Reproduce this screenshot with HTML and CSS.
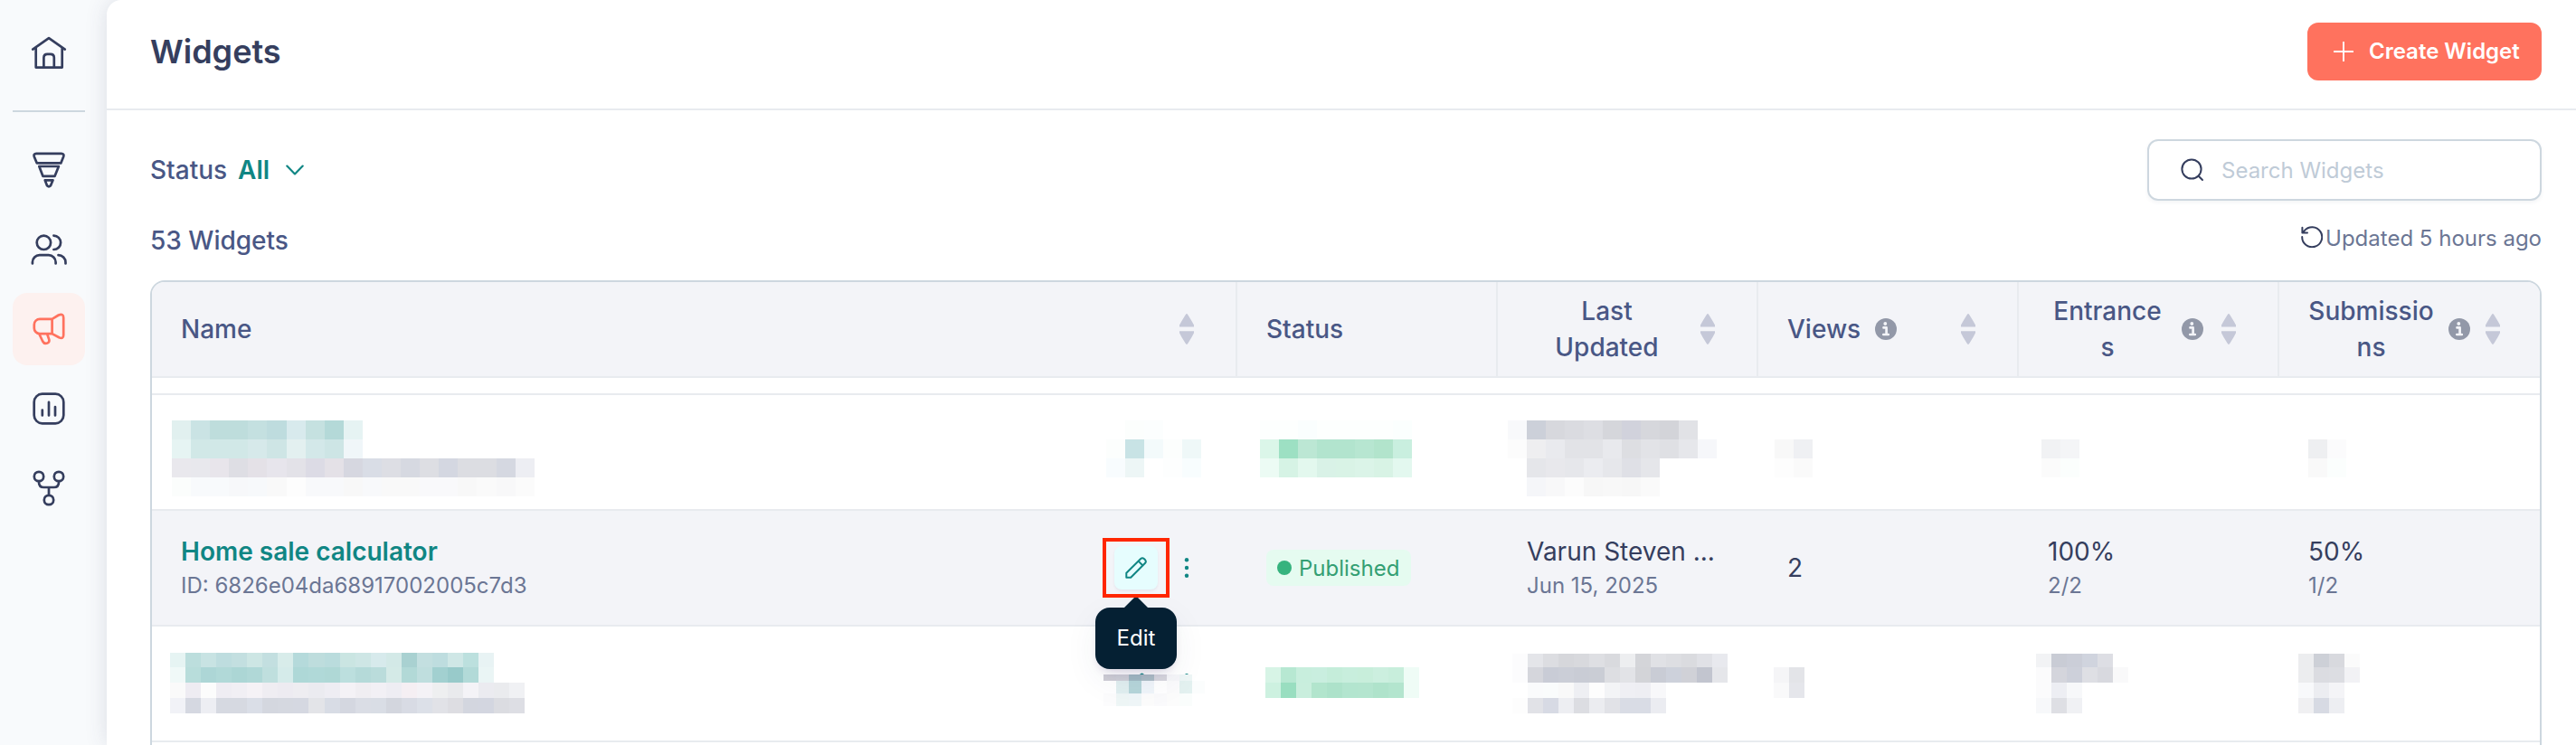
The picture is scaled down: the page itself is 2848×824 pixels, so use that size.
FILE: index.html
```html
<!DOCTYPE html>
<html lang="en">
<head>
<meta charset="utf-8">
<title>Widgets</title>
<link rel="stylesheet" href="styles.css">
</head>
<body>
<svg class="defs" width="0" height="0">
  <symbol id="sort" viewBox="0 0 16 34"><path d="M6.8.9Q8-.7 9.200.9L13.500 8 16 12.600V14.600H0V12.600L2.500 8ZM0 19.300H16V21.200L13.500 26 9.200 33Q8 34.700 6.800 33L2.500 26 0 21.200Z" fill="#c5c8d8"/></symbol>
  <symbol id="info" viewBox="0 0 24 24"><circle cx="12" cy="12" r="12" fill="#9298a8"/><circle cx="11.300" cy="6" r="1.900" fill="#f3f4f8"/><path d="M9.500 10.400H12.600V17.800M9.300 18H14.800" fill="none" stroke="#f3f4f8" stroke-width="2.700" stroke-linecap="round" stroke-linejoin="round"/></symbol>
</svg>
<div class="app">
  <nav class="sidebar">
    <a class="nav-item"><svg class="nav-icon" viewBox="0 0 48 48"><path d="M6.200 20.600 24 8.200 41.800 20.600M9.700 18.800V40.600H38.700V18.800M18.400 40V29.800Q18.400 25.800 22.400 25.800H25.800Q29.800 25.800 29.800 29.800V40"/></svg></a>
    <hr class="nav-rule">
    <a class="nav-item"><svg class="nav-icon" viewBox="0 0 48 48"><path d="M10.200 5.800H37.800Q41.300 6 40.200 9.200L37.300 16.400H10.800L7.800 9.200Q6.700 6 10.200 5.800ZM13.300 20H34.900L30.600 30.800H17.400ZM19.700 35.300H28.500L26 41.300Q24 43.300 22 41.300Z"/></svg></a>
    <a class="nav-item"><svg class="nav-icon" viewBox="0 0 48 48"><circle cx="18.400" cy="16.300" r="7.700"/><path d="M29.400 8.600A7.700 7.700 0 0 1 29.400 24M5.900 39.500V38A7.800 7.800 0 0 1 13.700 30.200H23.700A7.800 7.800 0 0 1 31.600 38V39.500M34.500 30.200A8 8 0 0 1 42.500 38.200V39.500"/></svg></a>
    <a class="nav-item active"><svg class="nav-icon" viewBox="0 0 48 48"><path d="M27.600 12.800H14A6.200 6.200 0 0 0 7.800 19V22.900A6.200 6.200 0 0 0 14 29.100H27.600ZM27.600 12.800 34.800 8.500Q40.200 6.300 40.200 11.500V30.500Q40.200 35.500 35.300 33.300L27.600 29.100M13.400 29.500 17.200 37.500Q19 40.900 22.300 39.600 25 38.300 24.300 35.600L22.200 29.500"/></svg></a>
    <a class="nav-item"><svg class="nav-icon" viewBox="0 0 48 48"><rect x="7.700" y="7.700" width="32.600" height="32.600" rx="9"/><path d="M16.800 25.600V31.500M24 16.800V31.500M31 22V31.500"/></svg></a>
    <a class="nav-item"><svg class="nav-icon" viewBox="0 0 48 48"><circle cx="13" cy="11" r="5.200"/><circle cx="35" cy="11" r="5.200"/><circle cx="24" cy="37" r="5.200"/><path d="M13 16.500V17.500Q13 23 18.500 23H29.500Q35 23 35 17.500V16.500M24 23V31.500"/></svg></a>
  </nav>
  <main class="main">
    <header class="page-header">
      <h1 class="title">Widgets</h1>
      <button class="create"><svg class="plus" viewBox="0 0 22 22"><path d="M11 .7V21.300M.7 11H21.300"/></svg><span>Create Widget</span></button>
    </header>
    <section class="content">
      <div class="toolbar">
        <div class="filter"><span>Status</span><span class="filter-value">All</span><svg class="chevron" viewBox="0 0 20 12"><path d="M1.300 1.600 10 10.400 18.700 1.600"/></svg></div>
        <div class="search"><svg class="search-icon" viewBox="0 0 26 26"><circle cx="12" cy="12" r="10.600"/><path d="M19.700 19.700 24 24"/></svg><span>Search Widgets</span></div>
      </div>
      <div class="summary">
        <span class="count">53 Widgets</span>
        <div class="updated"><svg class="refresh" viewBox="0 0 24 24"><path d="M1.200 12A11 11 0 1 0 3.700 5.200L1.400 7.500M1.400 1.800V7.600H7"/></svg><span>Updated 5 hours ago</span></div>
      </div>
      <div class="table">
        <div class="row head">
          <div class="th"><span class="label">Name</span><svg class="sort"><use href="#sort"/></svg></div>
          <div class="th"><span class="label">Status</span></div>
          <div class="th"><span class="label wrap">Last<br>Updated</span><svg class="sort"><use href="#sort"/></svg></div>
          <div class="th"><span class="label">Views</span><svg class="info"><use href="#info"/></svg><svg class="sort"><use href="#sort"/></svg></div>
          <div class="th entrances"><span class="label wrap">Entrance<br>s</span><svg class="info"><use href="#info"/></svg><svg class="sort"><use href="#sort"/></svg></div>
          <div class="th submissions"><span class="label wrap">Submissio<br>ns</span><svg class="info"><use href="#info"/></svg><svg class="sort"><use href="#sort"/></svg></div>
        </div>
        <div class="row sliver"></div>
        <div class="row redacted">
          <div class="cell"><svg data-mosaic="nameA"></svg><svg data-mosaic="actionsA"></svg></div>
          <div class="cell"><svg data-mosaic="statusA"></svg></div>
          <div class="cell"><svg data-mosaic="updatedA"></svg></div>
          <div class="cell"><svg data-mosaic="viewsA"></svg></div>
          <div class="cell"><svg data-mosaic="entrancesA"></svg></div>
          <div class="cell"><svg data-mosaic="submissionsA"></svg></div>
        </div>
        <div class="row hovered">
          <div class="cell name-cell">
            <div class="stack"><a class="name">Home sale calculator</a><span class="sub">ID: 6826e04da68917002005c7d3</span></div>
            <div class="actions">
              <div class="edit">
                <svg class="pencil" viewBox="0 0 24 24"><path d="M1.300 22.700V17.800L17.200 2Q19 .4 20.800 2L22.100 3.300Q23.600 5 22.100 6.800L6.200 22.700ZM14.600 4.600 19.500 9.500"/></svg>
                <div class="tooltip">Edit</div>
                <div class="highlight"></div>
              </div>
              <svg class="more" viewBox="0 0 6 24"><circle cx="3" cy="3.200" r="2.200"/><circle cx="3" cy="12" r="2.200"/><circle cx="3" cy="20.700" r="2.200"/></svg>
            </div>
          </div>
          <div class="cell"><span class="badge"><i class="dot"></i><span>Published</span></span></div>
          <div class="cell"><div class="stack"><span class="value">Varun Steven ...</span><span class="sub">Jun 15, 2025</span></div></div>
          <div class="cell"><span class="value">2</span></div>
          <div class="cell"><div class="stack"><span class="value">100%</span><span class="sub">2/2</span></div></div>
          <div class="cell"><div class="stack"><span class="value">50%</span><span class="sub">1/2</span></div></div>
        </div>
        <div class="row redacted">
          <div class="cell"><svg data-mosaic="nameB"></svg><svg data-mosaic="actionsB"><path d="M40 0Q42.500-3 45 0ZM90 0Q92-2 94 0Z" fill="#108684"/></svg></div>
          <div class="cell"><svg data-mosaic="statusB"></svg></div>
          <div class="cell"><svg data-mosaic="updatedB"></svg></div>
          <div class="cell"><svg data-mosaic="viewsB"></svg></div>
          <div class="cell"><svg data-mosaic="entrancesB"></svg></div>
          <div class="cell"><svg data-mosaic="submissionsB"></svg></div>
        </div>
        <div class="row"></div>
      </div>
    </section>
  </main>
</div>
<script src="mosaic.js"></script>
</body>
</html>
```
FILE: styles.css
```css
* { box-sizing: border-box; }
body { margin: 0; font-family: Inter, "Liberation Sans", sans-serif; background: #f8fafc; overflow: hidden; }
.defs { position: absolute; }
.app { display: flex; width: 2848px; height: 824px; overflow: hidden; }

.sidebar { width: 118px; flex: none; padding: 18px 24px 0 14px; display: flex; flex-direction: column; gap: 8px; }
.nav-item { width: 80px; height: 80px; border-radius: 16px; display: flex; align-items: center; justify-content: center; color: #353e5e; }
.nav-item.active { background: #fdf1ef; color: #ff725e; }
.nav-icon { width: 48px; height: 48px; fill: none; stroke: currentColor; stroke-width: 2.700; stroke-linecap: round; stroke-linejoin: round; }
.nav-rule { width: 80px; height: 2px; border: 0; background: #cdd7df; margin: 16px 0; }

.main { flex: 1; background: #fff; border-top-left-radius: 16px; box-shadow: 0 0 24px rgba(53, 62, 94, .15); }
.page-header { height: 122px; border-bottom: 2px solid #e8ebef; padding: 0 38px 6px 48px; display: flex; align-items: center; justify-content: space-between; }
.title { margin: 0; font-size: 36px; font-weight: 600; line-height: 48px; color: #353e5e; }
.create { width: 259px; height: 64px; border: 0; border-radius: 12px; background: #ff725e; color: #fff; font: 600 24px/32px Inter, sans-serif; display: flex; align-items: center; gap: 17px; padding: 0 0 0 29px; white-space: nowrap; }
.plus { width: 22px; height: 22px; fill: none; stroke: #fff; stroke-width: 1.900; stroke-linecap: round; }

.content { padding: 32px 38px 0 48px; }
.toolbar { height: 68px; display: flex; align-items: center; justify-content: space-between; }
.filter { display: flex; align-items: center; font-size: 28px; font-weight: 500; line-height: 40px; color: #495785; }
.filter-value { margin-left: 12px; font-weight: 600; color: #108684; }
.chevron { width: 20px; height: 12px; margin-left: 18px; fill: none; stroke: #108684; stroke-width: 2.200; stroke-linecap: round; stroke-linejoin: round; }
.search { width: 436px; height: 68px; border: 2px solid #cdd7df; border-radius: 12px; padding-left: 35px; display: flex; align-items: center; gap: 19px; font-size: 24px; color: #bfcbd7; box-shadow: 0 2px 4px rgba(53, 62, 94, .06); }
.search-icon { width: 26px; height: 26px; fill: none; stroke: #353e5e; stroke-width: 2; stroke-linecap: round; }
.summary { height: 88px; display: flex; align-items: center; justify-content: space-between; }
.count { font-size: 28px; font-weight: 500; color: #495785; }
.updated { display: flex; align-items: center; gap: 3px; padding-bottom: 5px; font-size: 24px; color: #6b7694; }
.refresh { width: 24px; height: 24px; margin-bottom: 3px; fill: none; stroke: #353e5e; stroke-width: 2; stroke-linecap: round; stroke-linejoin: round; }

.table { height: 540px; border: 2px solid #cdd7df; border-radius: 16px; overflow: hidden; }
.row { display: grid; grid-template-columns: 1200px repeat(5, 288px); height: 128px; border-bottom: 2px solid #e8ebef; }
.head { height: 106px; background: #f3f4f8; }
.sliver { height: 19px; }
.th { display: flex; align-items: center; padding: 0 46px 0 32px; border-right: 2px solid #e8ebef; font-size: 28px; font-weight: 500; line-height: 40px; color: #495785; }
.th:last-child { border-right: 0; }
.label { flex: none; }
.wrap { width: 177px; text-align: center; }
.sort { width: 16px; height: 34px; flex: none; margin-left: auto; }
.info { width: 24px; height: 24px; flex: none; margin-left: 16px; }
.entrances .wrap { width: 132px; }
.submissions .wrap { width: 139px; }
.submissions { padding-right: 44px; }

.hovered { background: #f3f4f8; }
.cell { display: flex; align-items: center; padding-left: 32px; }
.stack { display: flex; flex-direction: column; padding-bottom: 1px; }
.name { font-size: 28px; font-weight: 600; line-height: 40px; color: #108684; }
.value { font-size: 28px; line-height: 40px; color: #353e5e; }
.sub { font-size: 24px; line-height: 35px; color: #6b7694; }
.name-cell { justify-content: space-between; padding-right: 53px; }
.actions { display: flex; align-items: center; gap: 29px; }
.edit { position: relative; width: 48px; height: 48px; border-radius: 8px; background: #e6fdfe; box-shadow: 0 2px 3px rgba(53, 62, 94, .07); display: flex; align-items: center; justify-content: center; }
.pencil { width: 24px; height: 24px; fill: none; stroke: #108684; stroke-width: 2; stroke-linecap: round; stroke-linejoin: round; }
.more { width: 6px; height: 24px; fill: #108684; }
.highlight { position: absolute; left: -13px; top: -9px; width: 74px; height: 66px; border: 4px solid #ff2600; }
.tooltip { position: absolute; left: -21px; top: 68px; width: 90px; height: 68px; border-radius: 16px; background: #052033; color: #fff; font-size: 24px; line-height: 68px; text-align: center; box-shadow: 0 6px 12px -6px rgba(50, 20, 100, .25), 0 12px 40px -6px rgba(53, 62, 94, .1); }
.tooltip::before { content: ""; position: absolute; left: 31px; top: -13px; width: 28px; height: 14px; background: #052033; clip-path: polygon(50% 0, 100% 100%, 0 100%); }
.badge { display: flex; align-items: center; height: 40px; padding: 0 13px 0 12px; gap: 8px; border-radius: 8px; background: #e5fbf0; color: #349f73; font-size: 24px; }
.dot { width: 16px; height: 16px; border-radius: 50%; background: #36b37e; }

.redacted .cell { padding: 0; align-items: flex-start; }
.redacted svg { flex: none; overflow: visible; }
```
FILE: mosaic.js
```javascript
// Each mosaic: left gap and top gap in its cell, tile size, optional row heights, and tile colours ("-" is empty).
const mosaics = {
  nameA: { x: 22, y: 28, s: 21, w: 21.09, rows: [
    "e1f0ef cae3e4 bedddc bedddc c4e0e0 bedcde d8eaed c5e1e0 b4d9d8 e6f3f3",
    "e6f4f3 d1e8e7 d1e8e7 d1e8e7 d6e9ea cee5e5 e3f0f0 d3e8e9 cde5e5 f0f6f9",
    "e9e8ed e8e8ed e8e5eb dedee4 e4e1e7 e7e5ec e3e2e8 dcdbe5 e4e1e7 d6d7e0 d9dde6 dddee4 d6d9e1 dddee3 d4d7e1 dcdde2 dcdde2 d5d8e1 edeef3",
    "fbfdfc f8fafc f8fafc f7f8fa f7f9fb f9f9f9 fdfdfd f8f9fb f8f9fb f8f8f8 f8f9fb f9f9f9 f9f9f9 f9f9fb f9f9fb f8f8f8 fafafa f8f8f9 fbfbfb"] },
  actionsA: { x: 632, y: 28, s: 21, rows: [
    "- fcfefd fcfefe - -",
    "fcfefd c8e3e5 f3fafb fcfefd eff8f8",
    "f8fcfe edf6f6 - fdfefe f8fdfe"] },
  statusA: { x: 25, y: 28, s: 21, rows: [
    "fdfffe fdfffe fafefe fdfffe fdfffe fdfffe fdfffe fbfffe",
    "dbf6e9 9de0c3 bce7d4 b2e4ce b2e4ce b7e6d1 b2e4cc c9efdf",
    "ecfbf4 d6f3e5 e3f8ee d9f2e7 d9f3e6 dbf4e8 d8f3e5 e3f8ef"] },
  updatedA: { x: 11, y: 28, s: 21, rows: [
    "f8f9fb ccd0d9 d7d8dd dadbe0 dddee3 d5d6db d1d2dc d6d7dc d3d4d9 e1e2e6 -",
    "fcfcfc eeeef0 e9eaee e2e3e7 e2e3e7 e8e9ed dddee2 e2e3e7 dfe0e4 e6e7eb f6f7fa",
    "- e5e6ea e8e8ec e6e7eb ebecf0 e6e7eb dfe0e6 e5e6ea",
    "- f5f6f9 f8f8f9 fcfcfc f7f7f7 f8f8f8 f7f7f7 fafafa"] },
  viewsA: { x: 18, y: 49, s: 21, rows: ["f8f8f8 eff0f3", "fdfdfd fafafa"] },
  entrancesA: { x: 25, y: 49, s: 21, rows: ["f1f2f4 f4f5f7", "fbfbfb fbfefd"] },
  submissionsA: { x: 32, y: 49, s: 21, rows: ["eeeff1 fbfbfc", "f9f9f9 fbfefd"] },
  nameB: { x: 20, y: 29, s: 17, w: 17.05, h: [16, 17, 17, 17], rows: [
    "e6f4f3 bcdedd c8e3e3 bedddf c3dfe0 cde6e4 c3dfe0 d8ecea b5dadb bedddd badcdd cae5e2 cee6e5 d7eaec d3e9e7 a9d1d1 c3dfe0 bedddf cfe7e6 bce0de e8f3f4",
    "f0f9f8 b8dddb add6d6 b1d9d8 acd6d5 b0d8d7 bfdfde d5ebea aed8d7 b0d9d8 afd8d6 bcdfde b5dad9 badcdb d4eae7 b2d9d7 bfdede a2d0d0 98caca b2dad8 eaf5f5",
    "fafafa eeecf2 fcfcfc efedf3 f1eff4 f5f2f6 efedf2 edebf1 eeedf1 ebebf0 eeedf3 f4f2f6 f0eef2 f2f0f5 eeedf3 f5eff3 f4f2f6 eeeff0 e9eaed f4f3f7 ebebf0 eaebee f0f1f4",
    "f1f2f7 d5d8e1 edeef3 d6d9e1 d6d9e1 dadee7 d4d7df d5d8e0 d5d8e1 e3e4e8 d8dce5 d4d7e0 dadde5 d9dde5 d3d6de d8dbe4 dce0e8 e1e2e7 dddde2 d3d6df d3d6e0 dbdce1 dddee4"] },
  actionsB: { x: 640, y: 53, s: 14, h: [7, 14, 14], rows: [
    "cecdd5 cfcfd7 a2b9c3 adbcc6 d7d6de f6f6f9 eef6f6",
    "ffffff e1eff0 b6d6da f0f5fa ffffff fbfbfc e3f1f0 fbfdfd",
    "fcfcfd eef6f6 eff6f8 fcfcfc fafafc fcfcfc fafdfc"] },
  statusB: { x: 31, y: 45, s: 17, rows: [
    "d7f4e6 b7e8d2 c8eedd c9eedf c5edda c8eedd c8eedb ccefdf c8eedc effcf6",
    "cdf1e0 99dec0 c9eedd b2e5cd ade2ca b3e5cf b4e5cf afe3cb b3e5ce effcf6"] },
  updatedB: { x: 16, y: 30, s: 17, h: [15, 17, 17, 17], rows: [
    "fcfcfd e4e5e9 dcdde1 d6d7db d8d9dd dedfe3 d9dade edeef0 d4d5d9 e0e1e5 dddee2 dadbdf e0e1e6 e8e9ee",
    "fcfcfd d5d6dc c9ccd6 cbced7 c9ccd5 cacdd5 dddee2 e2e3e7 d3d4d8 c9ccd5 cdd1db d0d1d7 c2c5cf e5e6ea",
    "- fafbfc fafcfc f9f9f9 eeeff3 fdfdfd f3f4f6 efeff4 eeeef3 f8f8fa",
    "fdfdfd e1e2e7 d7dae4 edeef2 dcdde2 ebecf0 e1e2e7 d9dce5 d9dce5 ebecf1"] },
  viewsB: { x: 17, y: 45, s: 17, rows: ["f5f5f7 e3e4e8", "f9f9fa e5e6eb"] },
  entrancesB: { x: 19, y: 30, s: 17, h: [15, 17, 17, 17], rows: [
    "f2f3f5 c9ccd5 cbced8 d0d4de dddee4",
    "fbfbfc d4d5dc cdd0da dedfe4 d8d9df f9f9fa",
    "fbfbfc edeef3 f7f8fa",
    "f7f8fa dedfe4 f0f1f4"] },
  submissionsB: { x: 21, y: 30, s: 17, h: [15, 17, 17, 17], rows: [
    "ecedef cdd0d7 d8d9de fbfbfb",
    "ecedef dbdce1 dcdde2 f2f2f5",
    "f8f9fb ecedf1 f4f4f7",
    "f0f0f2 d7dae3 edeef2"] }
};

const ns = "http://www.w3.org/2000/svg";
document.querySelectorAll("[data-mosaic]").forEach(svg => {
  const m = mosaics[svg.dataset.mosaic];
  const step = m.w || m.s;
  let y = 0, cols = 0;
  m.rows.forEach((line, r) => {
    const h = m.h ? m.h[r] : m.s;
    const tiles = line.split(" ");
    cols = Math.max(cols, tiles.length);
    tiles.forEach((color, c) => {
      if (color === "-") return;
      const left = Math.round(c * step);
      const rect = document.createElementNS(ns, "rect");
      rect.setAttribute("x", left);
      rect.setAttribute("y", y);
      rect.setAttribute("width", Math.round((c + 1) * step) - left);
      rect.setAttribute("height", h);
      rect.setAttribute("fill", "#" + color);
      svg.appendChild(rect);
    });
    y += h;
  });
  svg.setAttribute("width", Math.round(cols * step));
  svg.setAttribute("height", y);
  svg.style.marginLeft = m.x + "px";
  svg.style.marginTop = m.y + "px";
});
```
